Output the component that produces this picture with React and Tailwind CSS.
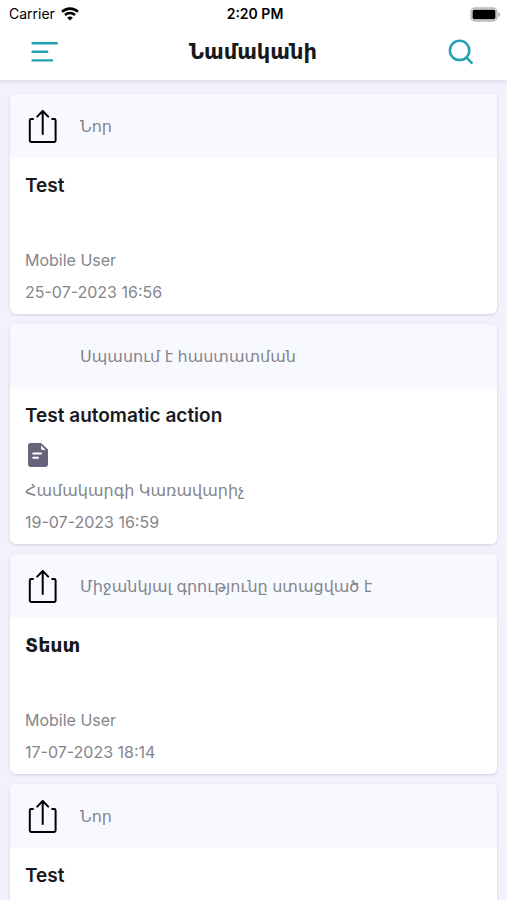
import React from "react";

const messages = [
  { id: 1, status: "Նոր", shared: true, title: "Test", author: "Mobile User", date: "25-07-2023 16:56" },
  {
    id: 2,
    status: "Սպասում է հաստատման",
    title: "Test automatic action",
    attachment: true,
    author: "Համակարգի Կառավարիչ",
    date: "19-07-2023 16:59",
  },
  {
    id: 3,
    status: "Միջանկյալ գրությունը ստացված է",
    shared: true,
    title: "Տեստ",
    author: "Mobile User",
    date: "17-07-2023 18:14",
  },
  { id: 4, status: "Նոր", shared: true, title: "Test" },
];

const WifiIcon = () => (
  <svg width="18" height="14" viewBox="0 0 18 14" fill="none" stroke="black" strokeWidth="2.6">
    <path d="M1 4.8C5.4.6 12.6.6 17 4.8" />
    <path d="M4 8C6.8 5.3 11.2 5.3 14 8" />
    <path d="M6.2 10.8C7.8 9.2 10.2 9.2 11.8 10.8L9 13.6Z" fill="black" stroke="none" />
  </svg>
);

const BatteryIcon = () => (
  <svg width="31" height="15" viewBox="0 0 31 15">
    <rect x="1" y="1" width="26" height="13" rx="4" fill="#e4e4e4" stroke="#b8b8b8" strokeWidth="1.4" />
    <rect x="2.6" y="2.8" width="22.8" height="9.4" rx="1.6" fill="black" />
    <path d="M28.4 5.2C30.6 6 30.6 9 28.4 9.8Z" fill="#a8a8a8" />
  </svg>
);

const MenuIcon = () => (
  <svg width="28" height="22" viewBox="0 0 28 22" stroke="#23a1b2" strokeWidth="2.4" strokeLinecap="round">
    <path d="M2.6 2.2H27M2.6 10.8H17.2M2.6 19.4H22" />
  </svg>
);

const SearchIcon = () => (
  <svg width="26" height="26" viewBox="0 0 26 26" fill="none" stroke="#23a1b2" strokeWidth="2.5">
    <circle cx="11.6" cy="11.4" r="9.7" />
    <path d="M18 18.2L24.4 24.6" />
  </svg>
);

const ShareIcon = () => (
  <svg
    width="30"
    height="36"
    viewBox="0 0 30 36"
    fill="none"
    stroke="black"
    strokeWidth="2"
    strokeLinecap="round"
    strokeLinejoin="round"
  >
    <path d="M5 11H3.2Q1.8 11 1.8 12.4V32.6Q1.8 34 3.2 34H26.2Q27.6 34 27.6 32.6V12.4Q27.6 11 26.2 11H24.2" />
    <path d="M14.7 26V3M9.2 8.6L14.7 3L20.2 8.6" />
  </svg>
);

const FileIcon = () => (
  <svg width="20" height="24" viewBox="0 0 20 24">
    <path d="M2.4 0H13L20 6.6V21.6Q20 24 17.6 24H2.4Q0 24 0 21.6V2.4Q0 0 2.4 0Z" fill="#66647a" />
    <path d="M13 2.4L17.6 7H14.4Q13 7 13 5.6Z" fill="white" />
    <path d="M5.2 10.4H13M5.2 14.8H10" stroke="white" strokeWidth="2" strokeLinecap="round" />
  </svg>
);

const MessageCard = ({ message }) => (
  <article className="shrink-0 overflow-hidden rounded-md bg-white shadow-[0_1px_3px_rgba(70,70,110,0.2)]">
    <div className="flex h-16 items-center bg-[#f8f9ff] pl-[18px]">
      <div className="w-13 shrink-0">{message.shared && <ShareIcon />}</div>
      <p className="text-base text-[#85858c]">{message.status}</p>
    </div>
    <div className="px-[15px] pt-4 pb-[10px] text-[#85858c]">
      <h2 className="text-[19px] leading-6 font-semibold text-[#18191c]">{message.title}</h2>
      <div className="flex h-[50px] items-center pt-1 pl-[3px]">{message.attachment && <FileIcon />}</div>
      {message.author && <p className="text-base leading-6">{message.author}</p>}
      {message.date && <p className="mt-2 text-base leading-6">{message.date}</p>}
    </div>
  </article>
);

const App = () => {
  return (
    <div className="flex h-screen flex-col overflow-hidden bg-[#f2f2fd] font-['Inter','DejaVu_Sans',sans-serif]">
      <header className="z-10 bg-white shadow-[0_1px_4px_rgba(70,70,110,0.2)]">
        <div className="grid h-7 grid-cols-3 items-center pr-[6px] pl-[9px] text-sm text-black">
          <div className="flex items-center gap-[6px]">
            <span>Carrier</span>
            <WifiIcon />
          </div>
          <span className="text-center font-semibold">2:20 PM</span>
          <div className="flex justify-end">
            <BatteryIcon />
          </div>
        </div>
        <div className="flex h-[52px] items-center justify-between pr-[33px] pb-1 pl-[30px]">
          <button aria-label="Menu">
            <MenuIcon />
          </button>
          <h1 className="text-[21px] font-semibold text-[#18191c]">Նամականի</h1>
          <button aria-label="Search">
            <SearchIcon />
          </button>
        </div>
      </header>

      <main className="flex flex-1 flex-col gap-[10px] overflow-y-auto px-[10px] pt-[14px]">
        {messages.map((message) => (
          <MessageCard key={message.id} message={message} />
        ))}
      </main>
    </div>
  );
};

export default App;
